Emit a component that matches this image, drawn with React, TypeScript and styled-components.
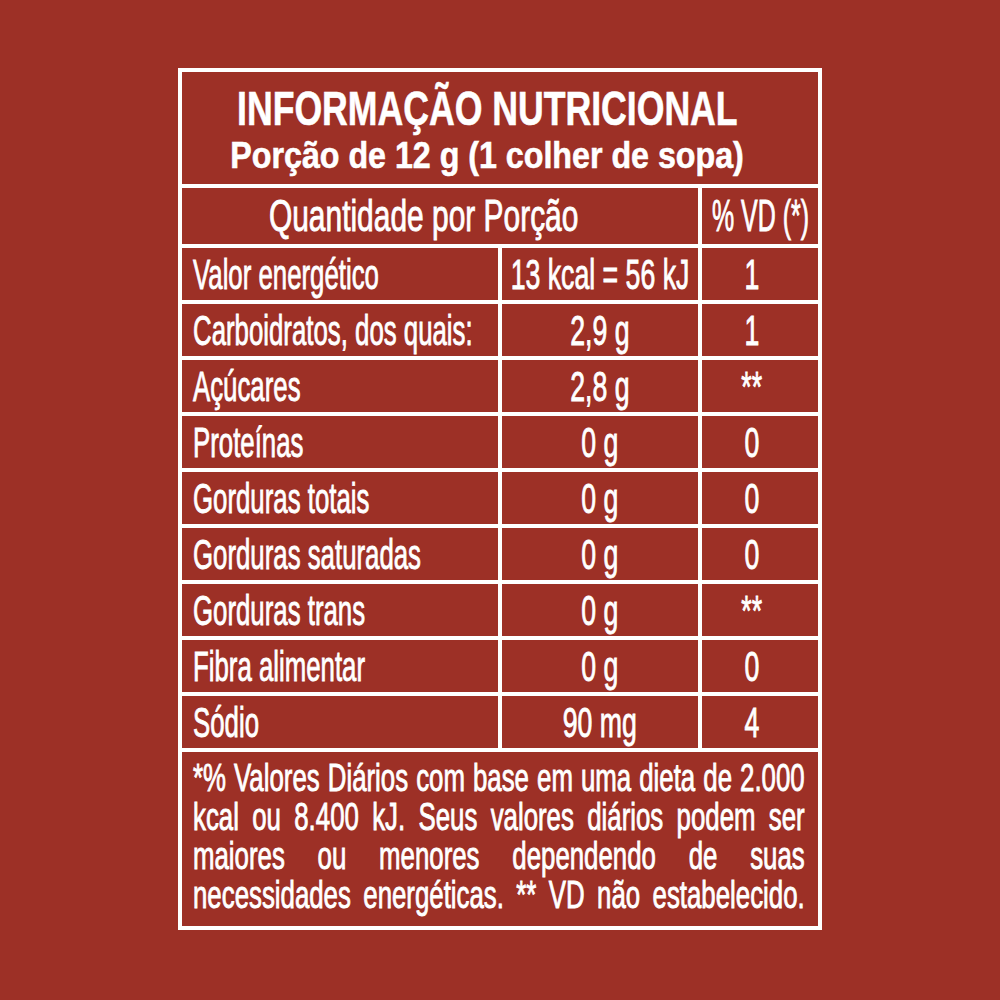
import styled, { createGlobalStyle } from 'styled-components';

const RED = '#9d3026';

const GlobalStyle = createGlobalStyle`
  html, body {
    margin: 0;
    padding: 0;
    background: ${RED};
  }
  body {
    font-family: 'Liberation Sans', Arial, sans-serif;
    color: #fff;
  }
`;

const rows = [
  { label: 'Valor energético', amount: '13 kcal = 56 kJ', vd: '1' },
  { label: 'Carboidratos, dos quais:', amount: '2,9 g', vd: '1' },
  { label: 'Açúcares', amount: '2,8 g', vd: '**' },
  { label: 'Proteínas', amount: '0 g', vd: '0' },
  { label: 'Gorduras totais', amount: '0 g', vd: '0' },
  { label: 'Gorduras saturadas', amount: '0 g', vd: '0' },
  { label: 'Gorduras trans', amount: '0 g', vd: '**' },
  { label: 'Fibra alimentar', amount: '0 g', vd: '0' },
  { label: 'Sódio', amount: '90 mg', vd: '4' }
];

const FOOT_SCALE = 0.662;

const App = () => {
  return (
    <Page>
      <GlobalStyle />
      <Table>
        <TitleCell>
          <TitleLine>
            <Squeeze $sx={0.742}>INFORMAÇÃO NUTRICIONAL</Squeeze>
          </TitleLine>
          <PortionLine>
            <Squeeze $sx={0.87}>Porção de 12 g (1 colher de sopa)</Squeeze>
          </PortionLine>
        </TitleCell>

        <HeadCell $span={2} $shift={32}>
          <Squeeze $sx={0.665}>Quantidade por Porção</Squeeze>
        </HeadCell>
        <HeadCell>
          <Squeeze $sx={0.555}>% VD (*)</Squeeze>
        </HeadCell>

        {rows.map(r => (
          <Row key={r.label}>
            <LabelCell>
              <Squeeze $sx={0.6} $origin='left center'>
                {r.label}
              </Squeeze>
            </LabelCell>
            <ValueCell>
              <Squeeze $sx={0.62}>{r.amount}</Squeeze>
            </ValueCell>
            <ValueCell $shift={16}>
              <Squeeze $sx={0.62}>{r.vd}</Squeeze>
            </ValueCell>
          </Row>
        ))}

        <FootCell>
          <FootText>
            *% Valores Diários com base em uma dieta de 2.000
            <br />
            kcal ou 8.400 kJ. Seus valores diários podem ser
            <br />
            maiores ou menores dependendo de suas
            <br />
            necessidades energéticas. ** VD não estabelecido.
          </FootText>
        </FootCell>
      </Table>
    </Page>
  );
};

const Page = styled.div`
  width: 1000px;
  height: 1000px;
  box-sizing: border-box;
  padding-top: 68px;
  display: flex;
  justify-content: center;
  align-items: flex-start;
  background: ${RED};
`;

const Table = styled.div`
  display: grid;
  grid-template-columns: 316px 196px 116px;
  grid-template-rows: 112px 56px repeat(9, 52px) 174px;
  gap: 4px;
  padding: 4px;
  background: #fff;
`;

const Cell = styled.div<{ $span?: number; $shift?: number }>`
  background: ${RED};
  display: flex;
  align-items: center;
  min-width: 0;
  overflow: hidden;
  grid-column: span ${p => p.$span || 1};
  padding-right: ${p => p.$shift || 0}px;
  white-space: nowrap;
  -webkit-text-stroke: 0.9px #fff;
`;

const Row = styled.div`
  display: contents;
`;

const TitleCell = styled(Cell)`
  grid-column: span 3;
  flex-direction: column;
  align-items: center;
  justify-content: flex-start;
  padding-top: 12px;
  padding-right: 26px;
  font-weight: 700;
  -webkit-text-stroke: 0.6px #fff;
`;

const TitleLine = styled.div`
  font-size: 48px;
  line-height: 50px;
  height: 50px;
`;

const PortionLine = styled.div`
  font-size: 37px;
  line-height: 44px;
  height: 44px;
`;

const HeadCell = styled(Cell)`
  justify-content: center;
  font-size: 45px;
  line-height: 56px;
`;

const LabelCell = styled(Cell)`
  justify-content: flex-start;
  padding-left: 11px;
  font-size: 43px;
  line-height: 52px;
`;

const ValueCell = styled(Cell)`
  justify-content: center;
  font-size: 43px;
  line-height: 52px;
`;

const Squeeze = styled.span<{ $sx: number; $origin?: string }>`
  display: inline-block;
  white-space: nowrap;
  transform: scaleX(${p => p.$sx});
  transform-origin: ${p => p.$origin || 'center center'};
`;

const FootCell = styled(Cell)`
  grid-column: span 3;
  align-items: flex-start;
  padding: 6px 0 0 11px;
`;

const FootText = styled.div`
  flex: none;
  width: ${Math.round(612 / FOOT_SCALE)}px;
  font-size: 39px;
  line-height: 39px;
  text-align: justify;
  text-align-last: justify;
  white-space: nowrap;
  transform: scaleX(${FOOT_SCALE});
  transform-origin: left top;
`;

export default App;
